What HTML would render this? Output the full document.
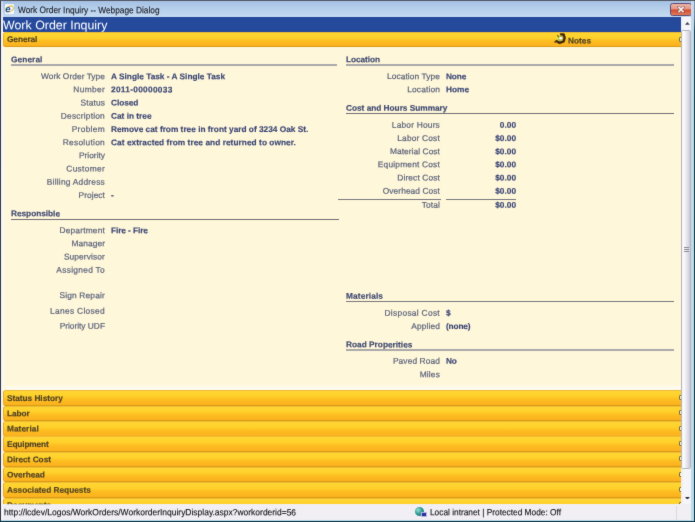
<!DOCTYPE html>
<html lang="en">
<head>
<meta charset="utf-8">
<title>Work Order Inquiry -- Webpage Dialog</title>
<style>
html,body{margin:0;padding:0;}
body{width:695px;height:522px;overflow:hidden;background:#fff7da;font-family:"Liberation Sans",Arial,sans-serif;}
#win{position:relative;width:695px;height:522px;overflow:hidden;background:#fff7da;}
#win div,#win span{position:absolute;white-space:nowrap;display:block;}
#page{left:0;top:0;width:695px;height:522px;background:#fff7da;filter:url(#soft);}
#shapes{left:0;top:0;width:695px;height:522px;}
#text{left:-4px;top:-4px;width:703px;height:530px;filter:blur(0.3px);}
#text>#tin{left:4px;top:4px;width:695px;height:522px;}
.lb,.vl,.nm,.hd,.bt,.st,.tt,.wh{transform-origin:0 0;line-height:12px;height:12px;}
.lb,.nm{transform-origin:100% 0;width:200px;text-align:right;}
.lb{font-size:8.4px;color:#565f79;-webkit-text-stroke:0.2px #565f79;}
.vl,.nm{font-size:8.3px;font-weight:bold;color:#384474;-webkit-text-stroke:0.14px #384474;}
.hd{font-size:8.3px;font-weight:bold;color:#3e4870;-webkit-text-stroke:0.16px #3e4870;}
.bt{font-size:8.3px;font-weight:bold;color:#4f4226;-webkit-text-stroke:0.15px #4f4226;}
.st{font-size:9px;color:#101014;-webkit-text-stroke:0.12px #101014;}
.tt{font-size:9.2px;color:#14161e;-webkit-text-stroke:0.1px #14161e;}
.wh{font-size:12.4px;line-height:15px;height:15px;color:#ffffff;}
.bar{left:3px;width:678px;height:15.6px;border-radius:2.5px 0 0 2.5px;background:linear-gradient(#ffd633 0%,#ffd02a 38%,#fdbd21 62%,#fbb01e 100%);box-sizing:border-box;border:1px solid #e9ab27;border-top-color:#edbb38;border-bottom-color:#db9b14;border-right:0;overflow:hidden;}
.bar i{position:absolute;right:-2.2px;top:3.8px;width:4px;height:5px;box-sizing:border-box;border:0.7px solid #7a6b2c;border-radius:1px;background:#fff4c4;}
</style>
</head>
<body>
<svg width="0" height="0" style="position:absolute;left:0;top:0"><defs><filter id="soft" x="0" y="0" width="100%" height="100%" color-interpolation-filters="sRGB"><feConvolveMatrix order="3" kernelMatrix="0.01 0.07 0.01 0.07 0.68 0.07 0.01 0.07 0.01" edgeMode="duplicate" preserveAlpha="true"/></filter></defs></svg>
<div id="win">
<div id="page"><div id="shapes">
<div style="left:0;top:0;width:695px;height:17px;background:linear-gradient(#a3bfe2 0%,#b3cdea 45%,#c6dbf2 100%)"></div>
<div style="left:0;top:0;width:695px;height:1px;background:#5d6270"></div>
<div style="left:5px;top:4px;width:9px;height:10px;background:#f4f7fb;border-radius:1px"></div>
<div style="left:5.2px;top:6px;width:8.6px;height:5.6px;border-radius:50%;box-sizing:border-box;border:1px solid #d8c24a;transform:rotate(-24deg)"></div>
<div style="left:670px;top:2.7px;width:22.2px;height:12.9px;box-sizing:border-box;border:1px solid #5a4b78;border-radius:2.5px;background:linear-gradient(#eeb3a4 0%,#e59483 48%,#d2492c 52%,#e07b5a 100%)"></div>
<svg style="position:absolute;left:677px;top:5.6px" width="8" height="7" viewBox="0 0 8 7"><path d="M1.6 1.2 L6.4 5.8 M6.4 1.2 L1.6 5.8" stroke="#4e3a4a" stroke-width="2.6" stroke-linecap="square" fill="none" opacity="0.55"/><path d="M1.9 1.4 L6.1 5.6 M6.1 1.4 L1.9 5.6" stroke="#f6f2ee" stroke-width="1.5" stroke-linecap="square" fill="none"/></svg>
<div style="left:3px;top:17px;width:678px;height:15px;background:#25499b"></div>
<div class="bar" style="top:31.8px"><i></i></div>
<svg style="position:absolute;left:553.9px;top:33.4px" width="12" height="11" viewBox="0 0 12 11"><path d="M3.4 3.4 L8.2 1.4 L10.4 4.6 L9.4 8.4 L5.4 9.8 L2.6 7.4 Z" fill="#b9b445" stroke="#e4d83a" stroke-width="1.2"/><path d="M7 1.3 L9.6 1.5 L10.7 4.6 L9.7 8.5 L5.6 9.9 L3.4 8.8" fill="none" stroke="#40260a" stroke-width="2.3" stroke-linejoin="round" stroke-linecap="round"/><path d="M3.7 2 L4.3 4.4" stroke="#4a3a10" stroke-width="1" fill="none"/><ellipse cx="6.7" cy="5.3" rx="1.5" ry="1.2" fill="#ffffff"/><path d="M1 9 L2.6 7.6" stroke="#40260a" stroke-width="1.4" stroke-linecap="round"/><path d="M2 5.4 L4 3.4 L4.6 5.6 L3 7 Z" fill="#e2ea36"/></svg>
<div style="left:11.00px;top:64.00px;width:326.30px;height:1.80px;background:#a9a9aa"></div>
<div style="left:11.00px;top:219.05px;width:328.00px;height:1.00px;background:#6e6e74"></div>
<div style="left:345.70px;top:64.00px;width:328.30px;height:1.80px;background:#a9a9aa"></div>
<div style="left:345.70px;top:113.10px;width:328.30px;height:1.00px;background:#6e6e74"></div>
<div style="left:337.60px;top:198.70px;width:103.00px;height:1.10px;background:#77777e"></div>
<div style="left:446.00px;top:198.70px;width:69.60px;height:1.10px;background:#77777e"></div>
<div style="left:345.70px;top:300.60px;width:328.30px;height:1.00px;background:#77777e"></div>
<div style="left:345.70px;top:349.20px;width:328.30px;height:1.60px;background:#a9a9aa"></div>
<div style="left:3px;top:385px;width:678px;height:5.6px;background:linear-gradient(#fff7da 0%,#fffaee 30%,#fffbf0 100%)"></div>
<div class="bar" style="top:390.40px"><i></i></div>
<div class="bar" style="top:405.70px"><i></i></div>
<div class="bar" style="top:421.00px"><i></i></div>
<div class="bar" style="top:436.30px"><i></i></div>
<div class="bar" style="top:451.60px"><i></i></div>
<div class="bar" style="top:466.90px"><i></i></div>
<div class="bar" style="top:482.20px"><i></i></div>
<div class="bar" style="top:497.50px"><i></i></div>
<div style="left:681px;top:17px;width:11px;height:487.5px;background:linear-gradient(90deg,#ecedf2 0%,#f6f6fa 30%,#f3f3f8 100%)"></div>
<div style="left:681px;top:503.6px;width:11px;height:1px;background:#c9c9d0"></div>
<div style="left:681.2px;top:30.4px;width:10.2px;height:438.2px;box-sizing:border-box;border:0.7px solid #b4b4be;border-radius:1.5px;background:linear-gradient(90deg,#f2f2f6 0%,#fcfcfe 22%,#e9e8ef 55%,#cdc9d6 100%)"></div>
<div style="left:684px;top:247.0px;width:5px;height:1px;background:#8c8c98"></div>
<div style="left:684px;top:249.0px;width:5px;height:1px;background:#8c8c98"></div>
<div style="left:684px;top:251.0px;width:5px;height:1px;background:#8c8c98"></div>
<svg style="position:absolute;left:685.2px;top:22px" width="4.8" height="2.8" viewBox="0 0 5.4 3"><path d="M0 3 L2.7 0 L5.4 3 Z" fill="#3d414d"/></svg>
<svg style="position:absolute;left:685.2px;top:496.6px" width="4.8" height="2.8" viewBox="0 0 5.4 3"><path d="M0 0 L2.7 3 L5.4 0 Z" fill="#2b2e38"/></svg>
<div style="left:0;top:504px;width:695px;height:18px;background:#f1eff3"></div>
<div style="left:415px;top:506.5px;width:9px;height:9px;border-radius:50%;background:radial-gradient(circle at 35% 35%,#9fe0d8 0%,#2d9c94 45%,#1c5f78 100%)"></div>
<div style="left:420.5px;top:511.5px;width:6px;height:5px;background:#2b2f9c;border:0.5px solid #b8b6e6;box-sizing:border-box"></div>
<div style="left:676px;top:505.5px;width:1px;height:14px;background:#dcdae0"></div>
<div style="left:0;top:1px;width:1.2px;height:521px;background:#3a3d50"></div>
<div style="left:1.2px;top:1px;width:2px;height:519px;background:linear-gradient(#c4d8ee 0%,#e4ecf8 3%,#f5f6f8 6%,#f7f7f6 100%)"></div>
<div style="left:3.2px;top:47px;width:2.4px;height:343px;background:linear-gradient(90deg,#fbf9e4,#fff7da)"></div>
<div style="left:691.4px;top:1px;width:2.3px;height:519px;background:linear-gradient(#c6dbf0 0%,#c0dcea 10%,#bcdbe8 100%)"></div>
<div style="left:693.6px;top:1px;width:1.4px;height:521px;background:linear-gradient(#8fa5bb 0%,#7f93a8 3%,#1d4858 6%,#0f3e52 100%)"></div>
<div style="left:1px;top:519.6px;width:693px;height:1px;background:#b9dbe8"></div>
<div style="left:0;top:520.5px;width:695px;height:1.5px;background:#0f3e52"></div>
</div>
<div id="text"><div id="tin">
<div style="left:6.1px;top:3px;font-size:9.6px;line-height:12px;font-weight:bold;color:#1d4f93;transform:matrix(1,0.0006,-0.12,1,0,0.2);transform-origin:0 0">e</div>
<div class="tt" style="left:17.8px;top:4px;transform:matrix(0.905,0.0006,0,1,0,0.10)">Work Order Inquiry -- Webpage Dialog</div>
<div class="wh" style="left:3.2px;top:18px;transform:matrix(1,0.0006,0,1,0,0.30)">Work Order Inquiry</div>
<div class="bt" style="left:7.20px;top:32px;transform:matrix(1,0.0006,0,1,0,0.95);letter-spacing:-0.084px">General</div>
<div class="bt" style="left:567.8px;top:34px;transform:matrix(1,0.0006,0,1,0,0.40)">Notes</div>
<div class="hd" style="left:11.00px;top:53px;transform:matrix(1,0.0006,0,1,0,0.15);letter-spacing:0.082px">General</div>
<div class="lb" style="left:-94.96px;top:70px;transform:matrix(1,0.0006,0,1,0,0.15);letter-spacing:0.038px">Work Order Type</div>
<div class="vl" style="left:111.00px;top:70px;transform:matrix(1,0.0006,0,1,0,0.15)">A Single Task - A Single Task</div>
<div class="lb" style="left:-94.68px;top:83px;transform:matrix(1,0.0006,0,1,0,0.35);letter-spacing:0.321px">Number</div>
<div class="vl" style="left:111.00px;top:83px;transform:matrix(1,0.0006,0,1,0,0.35);letter-spacing:0.301px">2011-00000033</div>
<div class="lb" style="left:-94.87px;top:96px;transform:matrix(1,0.0006,0,1,0,0.55);letter-spacing:0.130px">Status</div>
<div class="vl" style="left:111.00px;top:96px;transform:matrix(1,0.0006,0,1,0,0.55);letter-spacing:-0.074px">Closed</div>
<div class="lb" style="left:-94.79px;top:109px;transform:matrix(1,0.0006,0,1,0,0.75);letter-spacing:0.209px">Description</div>
<div class="vl" style="left:111.00px;top:109px;transform:matrix(1,0.0006,0,1,0,0.75)">Cat in tree</div>
<div class="lb" style="left:-94.70px;top:122px;transform:matrix(1,0.0006,0,1,0,0.95);letter-spacing:0.302px">Problem</div>
<div class="vl" style="left:111.00px;top:122px;transform:matrix(1,0.0006,0,1,0,0.95)">Remove cat from tree in front yard of 3234 Oak St.</div>
<div class="lb" style="left:-94.73px;top:136px;transform:matrix(1,0.0006,0,1,0,0.15);letter-spacing:0.269px">Resolution</div>
<div class="vl" style="left:111.00px;top:136px;transform:matrix(1,0.0006,0,1,0,0.15);letter-spacing:0.052px">Cat extracted from tree and returned to owner.</div>
<div class="lb" style="left:-95.01px;top:149px;transform:matrix(1,0.0006,0,1,0,0.35);letter-spacing:-0.009px">Priority</div>
<div class="lb" style="left:-94.70px;top:162px;transform:matrix(1,0.0006,0,1,0,0.55);letter-spacing:0.298px">Customer</div>
<div class="lb" style="left:-94.78px;top:175px;transform:matrix(1,0.0006,0,1,0,0.75);letter-spacing:0.219px">Billing Address</div>
<div class="lb" style="left:-94.95px;top:188px;transform:matrix(1,0.0006,0,1,0,0.95);letter-spacing:0.054px">Project</div>
<div class="vl" style="left:111.00px;top:188px;transform:matrix(1,0.0006,0,1,0,0.95)">-</div>
<div class="hd" style="left:11.00px;top:207px;transform:matrix(1,0.0006,0,1,0,0.35);letter-spacing:-0.034px">Responsible</div>
<div class="lb" style="left:-94.82px;top:224px;transform:matrix(1,0.0006,0,1,0,0.15);letter-spacing:0.182px">Department</div>
<div class="vl" style="left:111.00px;top:224px;transform:matrix(1,0.0006,0,1,0,0.15);letter-spacing:-0.091px">Fire - Fire</div>
<div class="lb" style="left:-94.94px;top:237px;transform:matrix(1,0.0006,0,1,0,0.35);letter-spacing:0.056px">Manager</div>
<div class="lb" style="left:-94.89px;top:250px;transform:matrix(1,0.0006,0,1,0,0.55);letter-spacing:0.108px">Supervisor</div>
<div class="lb" style="left:-94.71px;top:263px;transform:matrix(1,0.0006,0,1,0,0.75);letter-spacing:0.292px">Assigned To</div>
<div class="lb" style="left:-94.84px;top:289px;transform:matrix(1,0.0006,0,1,0,0.15);letter-spacing:0.163px">Sign Repair</div>
<div class="lb" style="left:-94.69px;top:304px;transform:matrix(1,0.0006,0,1,0,0.75);letter-spacing:0.307px">Lanes Closed</div>
<div class="lb" style="left:-95.02px;top:319px;transform:matrix(1,0.0006,0,1,0,0.75);letter-spacing:-0.019px">Priority UDF</div>
<div class="hd" style="left:346.30px;top:53px;transform:matrix(1,0.0006,0,1,0,0.15);letter-spacing:-0.083px">Location</div>
<div class="lb" style="left:239.68px;top:70px;transform:matrix(1,0.0006,0,1,0,0.15);letter-spacing:0.083px">Location Type</div>
<div class="vl" style="left:446.20px;top:70px;transform:matrix(1,0.0006,0,1,0,0.15);letter-spacing:-0.150px">None</div>
<div class="lb" style="left:239.73px;top:83px;transform:matrix(1,0.0006,0,1,0,0.35);letter-spacing:0.133px">Location</div>
<div class="vl" style="left:446.20px;top:83px;transform:matrix(1,0.0006,0,1,0,0.35)">Home</div>
<div class="hd" style="left:346.30px;top:101px;transform:matrix(1,0.0006,0,1,0,0.75);letter-spacing:-0.023px">Cost and Hours Summary</div>
<div class="lb" style="left:239.79px;top:118px;transform:matrix(1,0.0006,0,1,0,0.75);letter-spacing:0.191px">Labor Hours</div>
<div class="nm" style="left:315.60px;top:118px;transform:matrix(1,0.0006,0,1,0,0.75)">0.00</div>
<div class="lb" style="left:239.78px;top:131px;transform:matrix(1,0.0006,0,1,0,0.95);letter-spacing:0.181px">Labor Cost</div>
<div class="nm" style="left:315.60px;top:131px;transform:matrix(1,0.0006,0,1,0,0.95)">$0.00</div>
<div class="lb" style="left:239.65px;top:145px;transform:matrix(1,0.0006,0,1,0,0.15);letter-spacing:0.055px">Material Cost</div>
<div class="nm" style="left:315.60px;top:145px;transform:matrix(1,0.0006,0,1,0,0.15)">$0.00</div>
<div class="lb" style="left:239.79px;top:158px;transform:matrix(1,0.0006,0,1,0,0.35);letter-spacing:0.185px">Equipment Cost</div>
<div class="nm" style="left:315.60px;top:158px;transform:matrix(1,0.0006,0,1,0,0.35)">$0.00</div>
<div class="lb" style="left:239.72px;top:171px;transform:matrix(1,0.0006,0,1,0,0.55);letter-spacing:0.118px">Direct Cost</div>
<div class="nm" style="left:315.60px;top:171px;transform:matrix(1,0.0006,0,1,0,0.55)">$0.00</div>
<div class="lb" style="left:239.67px;top:184px;transform:matrix(1,0.0006,0,1,0,0.75);letter-spacing:0.073px">Overhead Cost</div>
<div class="nm" style="left:315.60px;top:184px;transform:matrix(1,0.0006,0,1,0,0.75)">$0.00</div>
<div class="lb" style="left:239.72px;top:198px;transform:matrix(1,0.0006,0,1,0,0.75);letter-spacing:0.124px">Total</div>
<div class="nm" style="left:315.60px;top:198px;transform:matrix(1,0.0006,0,1,0,0.75)">$0.00</div>
<div class="hd" style="left:346.30px;top:289px;transform:matrix(1,0.0006,0,1,0,0.75);letter-spacing:0.127px">Materials</div>
<div class="lb" style="left:239.89px;top:306px;transform:matrix(1,0.0006,0,1,0,0.75);letter-spacing:0.294px">Disposal Cost</div>
<div class="vl" style="left:446.20px;top:306px;transform:matrix(1,0.0006,0,1,0,0.75)">$</div>
<div class="lb" style="left:239.71px;top:319px;transform:matrix(1,0.0006,0,1,0,0.95);letter-spacing:0.108px">Applied</div>
<div class="vl" style="left:446.20px;top:319px;transform:matrix(1,0.0006,0,1,0,0.95);letter-spacing:-0.150px">(none)</div>
<div class="hd" style="left:346.30px;top:338px;transform:matrix(1,0.0006,0,1,0,0.35)">Road Properities</div>
<div class="lb" style="left:239.70px;top:354px;transform:matrix(1,0.0006,0,1,0,0.75);letter-spacing:0.099px">Paved Road</div>
<div class="vl" style="left:446.20px;top:354px;transform:matrix(1,0.0006,0,1,0,0.75);letter-spacing:-0.150px">No</div>
<div class="lb" style="left:239.76px;top:368px;transform:matrix(1,0.0006,0,1,0,0.15);letter-spacing:0.163px">Miles</div>
<div class="bt" style="left:7.40px;top:392px;transform:matrix(1,0.0006,0,1,0,0.00);letter-spacing:-0.035px">Status History</div>
<div class="bt" style="left:7.40px;top:407px;transform:matrix(1,0.0006,0,1,0,0.30);letter-spacing:-0.091px">Labor</div>
<div class="bt" style="left:7.40px;top:422px;transform:matrix(1,0.0006,0,1,0,0.60);letter-spacing:0.049px">Material</div>
<div class="bt" style="left:7.40px;top:437px;transform:matrix(1,0.0006,0,1,0,0.90);letter-spacing:-0.150px">Equipment</div>
<div class="bt" style="left:7.40px;top:453px;transform:matrix(1,0.0006,0,1,0,0.20);letter-spacing:-0.027px">Direct Cost</div>
<div class="bt" style="left:7.40px;top:468px;transform:matrix(1,0.0006,0,1,0,0.50);letter-spacing:-0.054px">Overhead</div>
<div class="bt" style="left:7.40px;top:483px;transform:matrix(1,0.0006,0,1,0,0.80);letter-spacing:-0.007px">Associated Requests</div>
<div class="bt" style="left:7.40px;top:499px;transform:matrix(1,0.0006,0,1,0,0.10);letter-spacing:-0.148px;clip-path:inset(0 0 6.80px 0)">Documents</div>
<div class="st" style="left:3.6px;top:506px;transform:matrix(0.941,0.0006,0,1,0,0.20)">http://lcdev/Logos/WorkOrders/WorkorderInquiryDisplay.aspx?workorderid=56</div>
<div class="st" style="left:429.5px;top:506px;transform:matrix(0.924,0.0006,0,1,0,0.20)">Local intranet | Protected Mode: Off</div>
</div></div>
</div>
</div>
</body>
</html>
